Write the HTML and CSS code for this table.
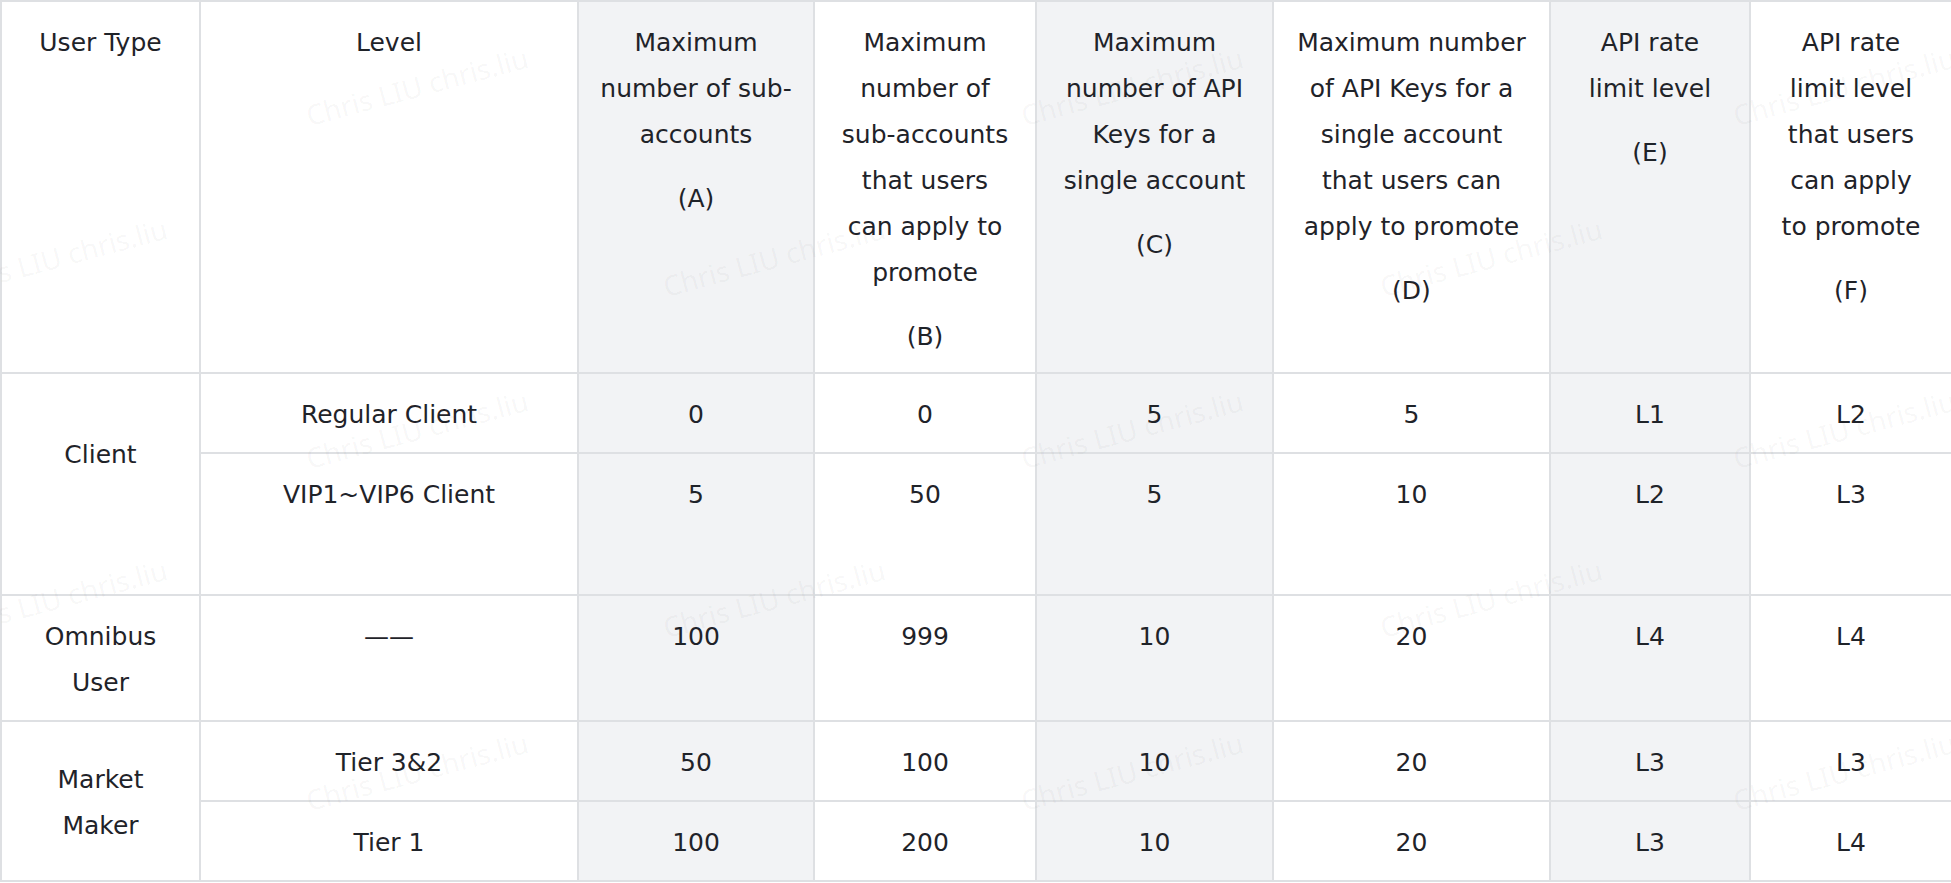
FILE: index.html
```html
<!DOCTYPE html>
<html lang="en">
<head>
<meta charset="utf-8">
<title>API limits by user type</title>
<link rel="stylesheet" href="styles.css">
</head>
<body>
<div class="sheet">
  <table class="limits">
    <colgroup>
      <col class="c-type">
      <col class="c-level">
      <col class="c-a shade">
      <col class="c-b">
      <col class="c-c shade">
      <col class="c-d">
      <col class="c-e shade">
      <col class="c-f">
    </colgroup>
    <thead>
      <tr>
        <th>User Type</th>
        <th>Level</th>
        <th>Maximum<br>number of sub-<br>accounts<div class="para">(A)</div></th>
        <th>Maximum<br>number of<br>sub-accounts<br>that users<br>can apply to<br>promote<div class="para">(B)</div></th>
        <th>Maximum<br>number of API<br>Keys for a<br>single account<div class="para">(C)</div></th>
        <th>Maximum number<br>of API Keys for a<br>single account<br>that users can<br>apply to promote<div class="para">(D)</div></th>
        <th>API rate<br>limit level<div class="para">(E)</div></th>
        <th>API rate<br>limit level<br>that users<br>can apply<br>to promote<div class="para">(F)</div></th>
      </tr>
    </thead>
    <tbody>
      <tr>
        <td rowspan="2" class="group">Client<div class="para empty">&nbsp;</div></td>
        <td>Regular Client</td>
        <td>0</td>
        <td>0</td>
        <td>5</td>
        <td>5</td>
        <td>L1</td>
        <td>L2</td>
      </tr>
      <tr>
        <td>VIP1~VIP6 Client<div class="para empty">&nbsp;</div></td>
        <td>5</td>
        <td>50</td>
        <td>5</td>
        <td>10</td>
        <td>L2</td>
        <td>L3</td>
      </tr>
      <tr>
        <td>Omnibus<br>User</td>
        <td>——</td>
        <td>100</td>
        <td>999</td>
        <td>10</td>
        <td>20</td>
        <td>L4</td>
        <td>L4</td>
      </tr>
      <tr>
        <td rowspan="2" class="group">Market<br>Maker</td>
        <td>Tier 3&amp;2</td>
        <td>50</td>
        <td>100</td>
        <td>10</td>
        <td>20</td>
        <td>L3</td>
        <td>L3</td>
      </tr>
      <tr>
        <td>Tier 1</td>
        <td>100</td>
        <td>200</td>
        <td>10</td>
        <td>20</td>
        <td>L3</td>
        <td>L4</td>
      </tr>
    </tbody>
  </table>

  <div class="watermarks" aria-hidden="true">
    <span class="wm r1 x1">Chris LIU chris.liu</span>
    <span class="wm r1 x2">Chris LIU chris.liu</span>
    <span class="wm r1 x3">Chris LIU chris.liu</span>
    <span class="wm r2 y1">Chris LIU chris.liu</span>
    <span class="wm r2 y2">Chris LIU chris.liu</span>
    <span class="wm r2 y3">Chris LIU chris.liu</span>
    <span class="wm r3 x1">Chris LIU chris.liu</span>
    <span class="wm r3 x2">Chris LIU chris.liu</span>
    <span class="wm r3 x3">Chris LIU chris.liu</span>
    <span class="wm r4 y1">Chris LIU chris.liu</span>
    <span class="wm r4 y2">Chris LIU chris.liu</span>
    <span class="wm r4 y3">Chris LIU chris.liu</span>
    <span class="wm r5 x1">Chris LIU chris.liu</span>
    <span class="wm r5 x2">Chris LIU chris.liu</span>
    <span class="wm r5 x3">Chris LIU chris.liu</span>
  </div>
</div>
</body>
</html>
```

FILE: styles.css
```css
html, body {
  margin: 0;
  padding: 0;
  background: #ffffff;
}

body {
  font-family: "DejaVu Sans", "Noto Sans", sans-serif;
  color: #1f2329;
}

.sheet {
  position: relative;
  width: 1951px;
  overflow: hidden;
}

.limits {
  width: 1951px;
  table-layout: fixed;
  border-collapse: collapse;
  font-size: 25px;
  line-height: 46px;
}

.c-type  { width: 199px; }
.c-level { width: 378px; }
.c-a     { width: 236px; }
.c-b     { width: 222px; }
.c-c     { width: 237px; }
.c-d     { width: 277px; }
.c-e     { width: 200px; }
.c-f     { width: 202px; }

.shade {
  background: #f2f3f5;
}

.limits th,
.limits td {
  border: 2px solid #dee0e3;
  padding: 18px 6px 14px;
  text-align: center;
  vertical-align: top;
  font-weight: normal;
  white-space: nowrap;
}

.limits th {
  padding-bottom: 12px;
}

.limits td.group {
  vertical-align: middle;
}

.para {
  margin-top: 18px;
}

.limits td .para {
  margin-top: 16px;
}

.watermarks {
  position: absolute;
  inset: 0;
  pointer-events: none;
  overflow: hidden;
}

.wm {
  position: absolute;
  transform: translate(-50%, -50%) rotate(-15deg);
  font-family: "Noto Sans", "Open Sans", sans-serif;
  font-size: 28px;
  line-height: 1;
  white-space: nowrap;
  color: rgba(31, 35, 41, 0.045);
}

.r1 { top: 86px; }
.r2 { top: 257px; }
.r3 { top: 429px; }
.r4 { top: 598px; }
.r5 { top: 771px; }

.x1 { left: 417px; }
.x2 { left: 1132px; }
.x3 { left: 1844px; }

.y1 { left: 56px; }
.y2 { left: 774px; }
.y3 { left: 1491px; }
```
